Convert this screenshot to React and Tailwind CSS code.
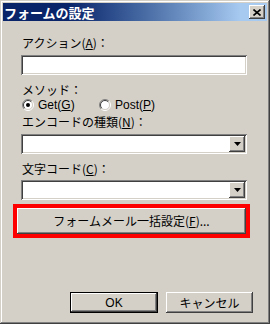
const font = "font-['Noto_Sans_CJK_JP','Noto_Sans',sans-serif]";
const latin = "font-['Liberation_Sans','Noto_Sans_CJK_JP',sans-serif]";

const raised =
  "shadow-[inset_-1px_-1px_#404040,inset_1px_1px_#ffffff,inset_-2px_-2px_#808080,inset_2px_2px_#d4d0c8]";
const sunken =
  "shadow-[inset_1px_1px_#808080,inset_-1px_-1px_#ffffff,inset_2px_2px_#404040,inset_-2px_-2px_#d4d0c8]";

function Key({ children }) {
  return <span className="underline underline-offset-1">{children}</span>;
}

function Label({ children, className = "" }) {
  return (
    <div className={`h-[14px] pl-[1px] text-[12px] leading-[14px] text-black ${className}`}>
      {children}
    </div>
  );
}

function Radio({ checked }) {
  return (
    <svg width="12" height="12" viewBox="0 0 12 12" className="shrink-0">
      <circle cx="6" cy="6" r="4.5" fill="#ffffff" />
      <path d="M2.1 9.9 A5.5 5.5 0 0 1 9.9 2.1" fill="none" stroke="#808080" strokeWidth="1" />
      <path d="M9.9 2.1 A5.5 5.5 0 0 1 2.1 9.9" fill="none" stroke="#ffffff" strokeWidth="1" />
      <path d="M2.8 9.2 A4.5 4.5 0 0 1 9.2 2.8" fill="none" stroke="#404040" strokeWidth="1" />
      <path d="M9.2 2.8 A4.5 4.5 0 0 1 2.8 9.2" fill="none" stroke="#d4d0c8" strokeWidth="1" />
      {checked && <circle cx="6" cy="6" r="2" fill="#000000" />}
    </svg>
  );
}

function Combo({ className = "" }) {
  return (
    <div className={`flex h-[20px] justify-end bg-white p-[2px] ${sunken} ${className}`}>
      <div className={`flex w-[16px] items-center justify-center bg-[#d4d0c8] ${raised}`}>
        <svg width="7" height="4" viewBox="0 0 7 4">
          <polygon points="0,0 7,0 3.5,4" fill="#000000" />
        </svg>
      </div>
    </div>
  );
}

export default function App() {
  return (
    <div
      className={`flex h-[324px] w-[270px] flex-col bg-[#d4d0c8] p-[3px] ${font} shadow-[inset_-1px_-1px_#404040,inset_1px_1px_#d4d0c8,inset_-2px_-2px_#808080,inset_2px_2px_#ffffff]`}
    >
      <div className="flex h-[18px] items-center justify-between bg-linear-to-r from-[#0a246a] from-25% to-[#a6caf0] to-90% pl-[1px] pr-[2px]">
        <span className="text-[13px] font-bold leading-[15px] text-white">フォームの設定</span>
        <button className={`flex h-[14px] w-[16px] items-center justify-center bg-[#d4d0c8] ${raised}`}>
          <svg width="8" height="7" viewBox="0 0 8 7">
            <path d="M0.5 0.5 L7.5 6.5 M7.5 0.5 L0.5 6.5" stroke="#000000" strokeWidth="1.6" />
          </svg>
        </button>
      </div>

      <div className="flex flex-1 flex-col pl-[18px] pr-[20px] pt-[15px]">
        <Label>
          アクション(<Key>A</Key>)：
        </Label>
        <div className={`mt-[5px] h-[20px] bg-white ${sunken}`} />

        <Label className="mt-[8px]">メソッド：</Label>
        <div className={`mt-[2px] flex h-[12px] items-center text-[12px] leading-[12px] ${latin}`}>
          <div className="flex w-[78px] items-center gap-[4px] pl-[1px]">
            <Radio checked />
            <span>
              Get(<Key>G</Key>)
            </span>
          </div>
          <div className="flex items-center gap-[4px]">
            <Radio />
            <span>
              Post(<Key>P</Key>)
            </span>
          </div>
        </div>

        <Label className="mt-[4px]">
          エンコードの種類(<Key>N</Key>)：
        </Label>
        <Combo className="mt-[5px]" />

        <Label className="mt-[8px]">
          文字コード(<Key>C</Key>)：
        </Label>
        <Combo className="mt-[4px]" />

        <div className="-ml-[8px] -mr-[3px] mt-[4px] border-4 border-[#ff0000]">
          <button
            className={`flex h-[26px] w-full items-center justify-center bg-[#d4d0c8] text-[12px] leading-[14px] text-black ${raised}`}
          >
            フォームメール一括設定(<Key>F</Key>)...
          </button>
        </div>

        <div className="mt-auto mb-[8px] -mr-[6px] flex justify-end gap-[8px]">
          <button className="h-[21px] w-[88px] border border-black bg-[#d4d0c8] p-0">
            <div
              className={`flex h-full w-full items-center justify-center text-[12px] leading-[14px] text-black ${latin} ${raised}`}
            >
              OK
            </div>
          </button>
          <button
            className={`flex h-[21px] w-[87px] items-center justify-center bg-[#d4d0c8] text-[12px] leading-[14px] text-black ${raised}`}
          >
            キャンセル
          </button>
        </div>
      </div>
    </div>
  );
}
